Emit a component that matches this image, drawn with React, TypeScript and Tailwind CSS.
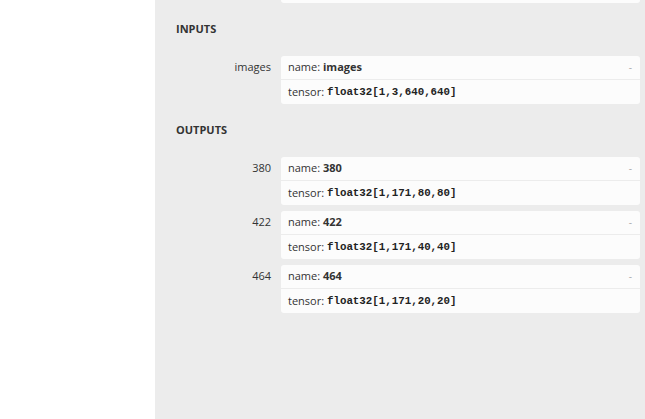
import { ReactNode } from 'react';

type Arg = { label: string; name: string; shape: string };

const INPUTS: Arg[] = [{ label: 'images', name: 'images', shape: 'float32[1,3,640,640]' }];

const OUTPUTS: Arg[] = [
  { label: '380', name: '380', shape: 'float32[1,171,80,80]' },
  { label: '422', name: '422', shape: 'float32[1,171,40,40]' },
  { label: '464', name: '464', shape: 'float32[1,171,20,20]' },
];

function Header({ children }: { children: ReactNode }) {
  return (
    <div className="mt-[19px] mb-[20px] h-[14px] pl-[21px] text-[11px] font-bold leading-[14px] text-[#333]">
      {children}
    </div>
  );
}

function ArgRow({ arg }: { arg: Arg }) {
  return (
    <div className="flex">
      <div className="w-[126px] shrink-0 pr-[10px] pt-[4px] text-right text-[11px] leading-[14px] text-[#333]">
        {arg.label}
      </div>
      <div className="mr-[5px] flex-1 overflow-hidden rounded-[3px] bg-[#fcfcfc]">
        <div className="flex h-[24px] items-center justify-between border-b border-[#ececec] pl-[7px] pr-[8px] text-[11px] text-[#333]">
          <span>
            name: <b className="font-bold">{arg.name}</b>
          </span>
          <span className="text-[10px] text-[#aaa]">-</span>
        </div>
        <div className="flex h-[24px] items-center pl-[7px] text-[11px] text-[#333]">
          <span>tensor:&nbsp;</span>
          <code className="font-['Liberation_Mono',monospace] text-[10.8px] font-bold text-[#222]">{arg.shape}</code>
        </div>
      </div>
    </div>
  );
}

export default function App() {
  return (
    <div className="flex h-[419px] w-[645px] overflow-hidden font-['Open_Sans','Noto_Sans',sans-serif]">
      <div className="w-[155px] shrink-0 bg-white" />
      <div className="flex-1 bg-[#ececec]">
        <div className="ml-[126px] mr-[5px] h-[3px] rounded-b-[3px] bg-[#fcfcfc]" />
        <Header>INPUTS</Header>
        <div className="flex flex-col gap-[6px]">
          {INPUTS.map((a) => (
            <ArgRow key={a.label} arg={a} />
          ))}
        </div>
        <Header>OUTPUTS</Header>
        <div className="flex flex-col gap-[6px]">
          {OUTPUTS.map((a) => (
            <ArgRow key={a.label} arg={a} />
          ))}
        </div>
      </div>
    </div>
  );
}
